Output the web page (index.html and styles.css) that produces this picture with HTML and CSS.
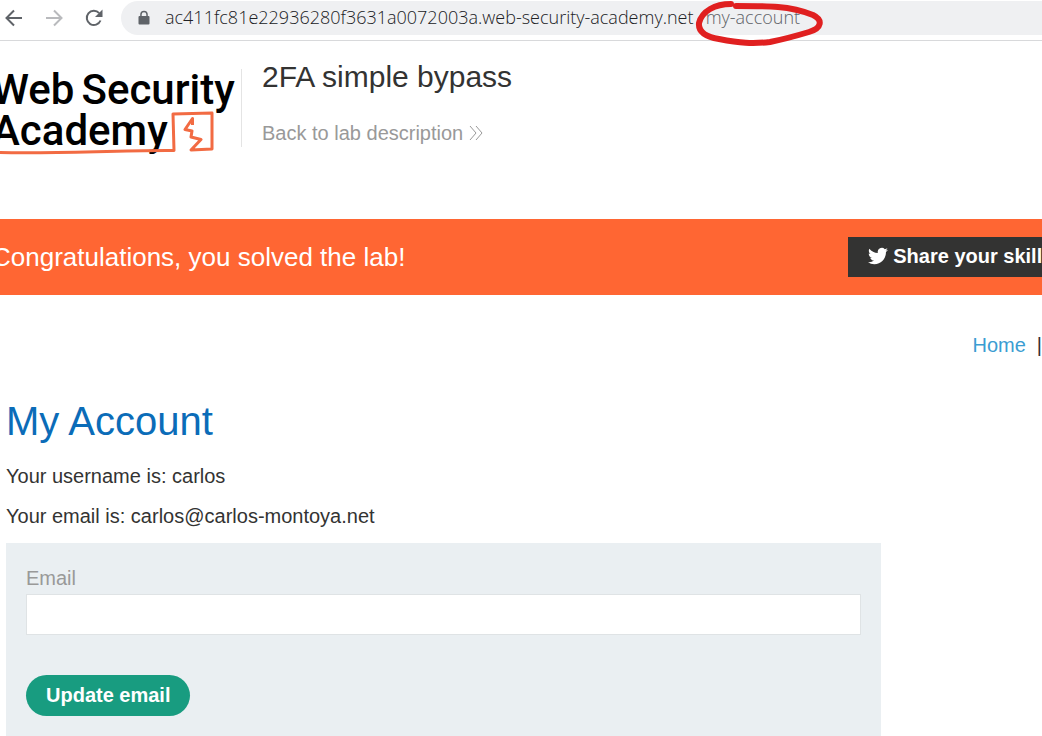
FILE: index.html
```html
<!DOCTYPE html>
<html lang="en">
<head>
<meta charset="utf-8">
<title>2FA simple bypass</title>
<link rel="stylesheet" href="styles.css">
</head>
<body>
<div class="toolbar">
  <button class="tool" aria-label="Back"><svg width="18" height="18" viewBox="0 0 18 18"><path d="M17 9H2M9 1.500L1.500 9L9 16.500"/></svg></button>
  <button class="tool tool-off" aria-label="Forward"><svg width="18" height="18" viewBox="0 0 18 18"><path d="M1 9H16M9 1.500L16.500 9L9 16.500"/></svg></button>
  <button class="tool" aria-label="Reload"><svg width="18" height="18" viewBox="0 0 18 18"><path d="M15.500 11.500A7.100 7.100 0 1 1 14.200 4.200"/><path class="solid" d="M17.500 0.500V8H10Z"/></svg></button>
  <div class="address">
    <svg class="lock" width="12" height="16" viewBox="0 0 12 16"><path d="M1.500 6H2.200V4.500A3.800 3.800 0 0 1 9.800 4.500V6H10.500Q11.500 6 11.500 7V13.500Q11.500 14.500 10.500 14.500H1.500Q0.500 14.500 0.500 13.500V7Q0.500 6 1.500 6ZM3.700 6H8.300V4.500A2.300 2.300 0 0 0 3.700 4.500Z"/></svg>
    <div class="url"><span>ac411fc81e22936280f3631a0072003a.web-security-academy.net</span><span class="path">/my-account<svg class="scribble" width="130" height="48" viewBox="0 0 130 48"><path d="M36 4C20 4 7 11 4 23C3 33 12 37 24 39C45 43 57 44 75 42C90 39 104 35 114 32C127 28 128 20 118 15C108 11 96 8 83 7C70 6 55 6 41 6"/></svg></span></div>
  </div>
</div>
<header class="lab-header">
  <a class="logo" href="#" aria-label="Web Security Academy">
    <span class="logo-line"><span>Web</span><span>Security</span></span>
    <span class="logo-line">Academy</span>
    <svg class="logo-mark" width="214" height="44" viewBox="0 0 214 44"><path d="M0 41.500C60 43 115 39 174 39.500L173 3L212 2L212 38L191 39L201 28.500L191 26L192 20L185 18.500L192.500 7.500V14"/></svg>
  </a>
  <div class="lab-title">
    <h2>2FA simple bypass</h2>
    <a href="#">Back to lab description <svg width="15" height="16" viewBox="0 0 15 16"><path d="M1 1L7 8L1 15M7 1L13 8L7 15"/></svg></a>
  </div>
</header>
<section class="banner">
  <p>Congratulations, you solved the lab!</p>
  <a class="share" href="#"><svg width="20" height="20" viewBox="0 0 24 24"><path d="M23.950 4.570a10 10 0 0 1-2.820.770 4.960 4.960 0 0 0 2.160-2.720c-.950.550-2 .950-3.130 1.180a4.920 4.920 0 0 0-8.380 4.480C7.690 8.090 4.070 6.130 1.640 3.160a4.820 4.820 0 0 0-.660 2.480c0 1.710.870 3.210 2.190 4.100a4.900 4.900 0 0 1-2.230-.620v.060a4.920 4.920 0 0 0 3.950 4.830 5 5 0 0 1-2.210.080 4.940 4.940 0 0 0 4.600 3.420A9.870 9.870 0 0 1 0 19.540a13.990 13.990 0 0 0 7.550 2.210c9.050 0 14-7.500 14-13.980 0-.210 0-.420-.020-.630a9.940 9.940 0 0 0 2.460-2.550z"/></svg>Share your skills!</a>
</section>
<nav class="links"><a href="#">Home</a><span>|</span></nav>
<main class="account">
  <h1>My Account</h1>
  <p>Your username is: carlos</p>
  <p>Your email is: carlos@carlos-montoya.net</p>
  <form class="email-form">
    <label for="email">Email</label>
    <input id="email" type="email">
    <button type="button">Update email</button>
  </form>
</main>
</body>
</html>
```
FILE: styles.css
```css
* { box-sizing: border-box; }
html { height: 100%; overflow: hidden; }
body {
  display: flex;
  flex-direction: column;
  min-height: 100%;
  margin: 0;
  overflow: hidden;
  background: #fff;
  color: #333332;
  font: 20px/24px "Liberation Sans", Arial, sans-serif;
}
h1, h2, p { margin: 0; font-weight: 400; }
a { text-decoration: none; }
svg { display: block; fill: none; flex-shrink: 0; }

.toolbar {
  display: flex;
  align-items: center;
  gap: 22px;
  padding: 1px 0 5px 5px;
  border-bottom: 1px solid #d8d9db;
}
.tool {
  padding: 0;
  border: 0;
  background: none;
  stroke: #5f6368;
  stroke-width: 2;
}
.tool-off { stroke: #b9babd; }
.tool .solid { fill: #5f6368; stroke: none; }
.address {
  display: flex;
  flex: 1;
  align-items: center;
  gap: 15px;
  height: 34px;
  margin-left: -4px;
  padding-left: 17px;
  border-radius: 17px 0 0 17px;
  background: #eff0f2;
}
.lock { fill: #5f6368; fill-rule: evenodd; }
.url {
  padding-bottom: 2px;
  color: #202124;
  font: 300 18px/26px "Open Sans", "Noto Sans", sans-serif;
  white-space: nowrap;
}
.path { position: relative; margin-left: 6px; color: #5f6368; }
.scribble {
  position: absolute;
  top: -5px;
  left: -5px;
  stroke: #e02020;
  stroke-width: 6;
  stroke-linecap: round;
}

.lab-header { display: flex; padding: 28px 0 64px; }
.logo {
  position: relative;
  display: flex;
  flex-direction: column;
  width: 242px;
  height: 78px;
  margin-bottom: 8px;
  border-right: 1px solid #e4e4e4;
  color: #000;
  font: 500 42px/41px Roboto, sans-serif;
  white-space: nowrap;
}
.logo-line { display: flex; gap: 7px; margin-left: -8px; }
.logo-mark {
  position: absolute;
  top: 42px;
  left: 0;
  stroke: #f26b43;
  stroke-width: 3;
  stroke-linejoin: round;
}
.lab-title { padding-left: 20px; }
.lab-title h2 { margin-top: -10px; font-size: 30px; line-height: 36px; }
.lab-title a {
  display: flex;
  align-items: center;
  gap: 6px;
  margin-top: 26px;
  color: #999;
}
.lab-title svg { stroke: #999; }

.banner {
  display: flex;
  align-items: center;
  justify-content: space-between;
  padding: 18px 0;
  background: #f63;
  color: #fff;
}
.banner p { margin-left: -8px; font-size: 26px; line-height: 32px; }
.share {
  display: flex;
  align-items: center;
  gap: 5px;
  height: 40px;
  margin-right: -38px;
  padding: 0 20px 2px;
  background: #333332;
  color: #fff;
  font-weight: 700;
  white-space: nowrap;
}
.share svg { fill: #fff; }
.links {
  display: flex;
  justify-content: flex-end;
  gap: 11px;
  padding-top: 38px;
}
.links a { color: #3b9dd2; }

.account {
  display: flex;
  flex: 1;
  flex-direction: column;
  width: 84%;
  margin: 40px 0 0 6px;
}
.account h1 { margin-bottom: 19px; color: #0b6cb8; font-size: 40px; line-height: 48px; }
.account p { margin-bottom: 16px; }
.email-form {
  display: flex;
  flex: 1;
  flex-direction: column;
  align-items: flex-start;
  margin-top: -1px;
  padding: 23px 20px 20px;
  background: #eaeff2;
}
.email-form label { color: #999; }
.email-form input {
  width: 100%;
  height: 41px;
  margin: 4px 0 40px;
  padding: 0 10px;
  border: 1px solid #dfe3e5;
  background: #fff;
  font: inherit;
}
.email-form button {
  height: 41px;
  padding: 0 20px 2px;
  border: 0;
  border-radius: 21px;
  background: #189c80;
  color: #fff;
  font: inherit;
  font-weight: 700;
}
```
